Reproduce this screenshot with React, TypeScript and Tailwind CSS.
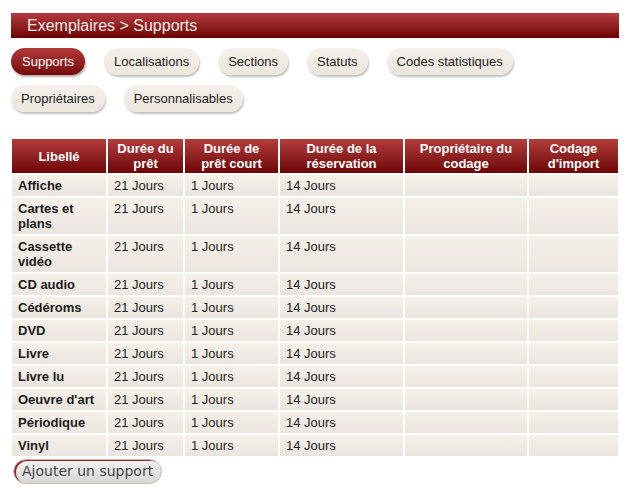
const tabsRow1 = ['Supports', 'Localisations', 'Sections', 'Statuts', 'Codes statistiques']
const tabsRow2 = ['Propriétaires', 'Personnalisables']

const columns = [
  { label: 'Libellé', w: 'w-[94px]' },
  { label: 'Durée du prêt', w: 'w-[75px]' },
  { label: 'Durée de prêt court', w: 'w-[93px]' },
  { label: 'Durée de la réservation', w: 'w-[123px]' },
  { label: 'Propriétaire du codage', w: 'w-[122px]' },
  { label: "Codage d'import", w: 'w-[89px]' },
]

const rows = [
  'Affiche',
  'Cartes et plans',
  'Cassette vidéo',
  'CD audio',
  'Cédéroms',
  'DVD',
  'Livre',
  'Livre lu',
  "Oeuvre d'art",
  'Périodique',
  'Vinyl',
]

function Tab({ label, active }: { label: string; active?: boolean }) {
  return (
    <span
      className={
        active
          ? 'rounded-full px-[11px] py-[6px] text-[13px] leading-[15px] text-white bg-gradient-to-b from-[#b23a3a] to-[#760606] shadow-[1px_2px_2px_rgba(0,0,0,0.3)]'
          : 'rounded-full px-[10px] py-[6px] text-[13px] leading-[15px] text-[#222] bg-gradient-to-b from-[#f5f1ea] to-[#ece6dd] shadow-[1px_2px_2px_rgba(0,0,0,0.25)]'
      }
    >
      {label}
    </span>
  )
}

const cell = 'bg-gradient-to-b from-[#f5f0e8] to-[#ebe5df] px-[6px] py-[3px] align-top'

export default function App() {
  return (
    <div className="min-h-[495px] w-[630px] bg-white pt-[13px] font-['Liberation_Sans',Arial,sans-serif]">
      <div className="mx-[11px] h-[25px] bg-gradient-to-b from-[#b53c3e] to-[#6c0000] pl-[16px] text-[16px] leading-[25px] text-[#f7eaea]">
        Exemplaires &gt; Supports
      </div>

      <div className="mx-[11px] mt-[10px] flex flex-col gap-[10px]">
        <div className="flex gap-[19px]">
          {tabsRow1.map((t, i) => (
            <Tab key={t} label={t} active={i === 0} />
          ))}
        </div>
        <div className="flex gap-[19px]">
          {tabsRow2.map((t) => (
            <Tab key={t} label={t} />
          ))}
        </div>
      </div>

      <table className="ml-[10px] mt-[25px] border-separate border-spacing-[2px] text-[13px] leading-[15px]">
        <thead>
          <tr>
            {columns.map((c) => (
              <th
                key={c.label}
                className={`${c.w} bg-gradient-to-b from-[#b43c3e] to-[#6d0303] px-[6px] py-[2px] text-center align-middle font-bold text-white`}
              >
                {c.label}
              </th>
            ))}
          </tr>
        </thead>
        <tbody>
          {rows.map((r) => (
            <tr key={r}>
              <td className={`${cell} font-bold text-[#1a1a1a]`}>{r}</td>
              <td className={`${cell} text-[#222]`}>21 Jours</td>
              <td className={`${cell} text-[#222]`}>1 Jours</td>
              <td className={`${cell} text-[#222]`}>14 Jours</td>
              <td className={cell}></td>
              <td className={cell}></td>
            </tr>
          ))}
        </tbody>
      </table>

      <div className="ml-[13px] mt-[1px]">
        <button className="h-[25px] rounded-full border border-[#c9b9b9] bg-gradient-to-b from-[#f2f2f2] to-[#d6d6d6] px-[8px] font-['DejaVu_Sans',sans-serif] text-[14px] leading-[23px] text-[#444] shadow-[inset_2px_1px_0_#8e2c2c]">
          Ajouter un support
        </button>
      </div>
    </div>
  )
}
